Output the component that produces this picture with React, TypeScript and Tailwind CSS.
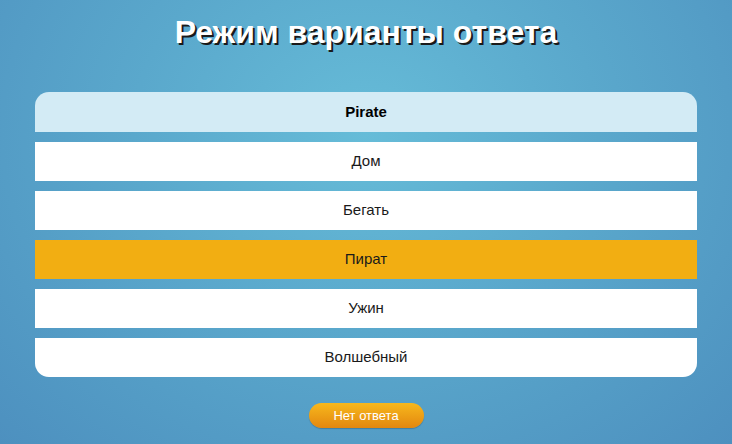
import React from 'react';

const options = ['Дом', 'Бегать', 'Пират', 'Ужин', 'Волшебный'];
const selected = 'Пират';

export default function App() {
  return (
    <div className="w-[732px] h-[444px] overflow-hidden bg-[radial-gradient(ellipse_at_50%_30%,#66bcd8_0%,#5aa8cc_45%,#4d90bf_100%)] font-['Liberation_Sans',Arial,sans-serif] flex flex-col items-center">
      {/* Title */}
      <h1 className="mt-[14px] h-[36px] text-[32px] leading-[36px] font-bold text-white [text-shadow:2px_2px_0_#1a1a1a]">
        Режим варианты ответа
      </h1>

      {/* Options */}
      <div className="mt-[42px] w-[662px] flex flex-col gap-[10px]">
        <div className="h-[40px] rounded-t-[14px] bg-[#d3ebf5] flex items-center justify-center text-[15px] font-bold text-black">
          Pirate
        </div>
        {options.map((o, i) => (
          <div
            key={o}
            className={
              'h-[39px] flex items-center justify-center text-[15px] text-[#1a1a1a] ' +
              (o === selected ? 'bg-[#f2ae12] ' : 'bg-white ') +
              (i === options.length - 1 ? 'rounded-b-[14px]' : '')
            }
          >
            {o}
          </div>
        ))}
      </div>

      {/* Footer */}
      <button className="mt-[26px] w-[115px] h-[25px] rounded-full bg-gradient-to-b from-[#f7b81c] to-[#e3870f] text-white text-[13px] shadow-[0_1px_1px_rgba(0,0,0,0.2)]">
        Нет ответа
      </button>
    </div>
  );
}
